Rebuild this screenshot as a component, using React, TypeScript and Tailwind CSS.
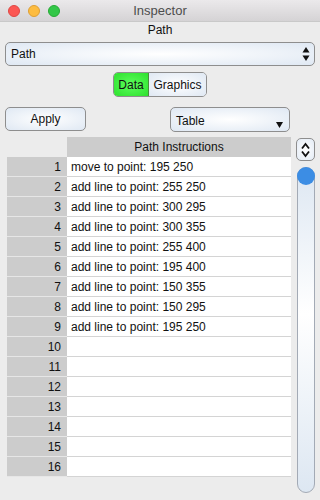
const rows = [
  "move to point: 195 250",
  "add line to point: 255 250",
  "add line to point: 300 295",
  "add line to point: 300 355",
  "add line to point: 255 400",
  "add line to point: 195 400",
  "add line to point: 150 355",
  "add line to point: 150 295",
  "add line to point: 195 250",
  "",
  "",
  "",
  "",
  "",
  "",
  "",
];

function UpDown({ className }: { className?: string }) {
  return (
    <svg width="8" height="16" viewBox="0 0 8 16" className={className}>
      <path d="M4 1 L7.5 6.5 L0.5 6.5 Z" fill="#111" />
      <path d="M4 15 L7.5 9.5 L0.5 9.5 Z" fill="#111" />
    </svg>
  );
}

export default function App() {
  return (
    <div className="w-[320px] h-[500px] overflow-hidden bg-[#ececec] font-['Liberation_Sans',Arial,sans-serif] text-[12px] text-[#111] flex flex-col">
      {/* title bar */}
      <div className="relative h-[22px] shrink-0 flex items-center gap-[8px] pl-[8px] border-b border-[#c9c9c9] bg-[linear-gradient(#ebe9eb,#d5d3d5)]">
        <span className="w-[12px] h-[12px] rounded-full bg-[#fc5753] border border-[#df4744]" />
        <span className="w-[12px] h-[12px] rounded-full bg-[#fdbc40] border border-[#de9f34]" />
        <span className="w-[12px] h-[12px] rounded-full bg-[#33c748] border border-[#27aa35]" />
        <span className="absolute inset-0 flex items-center justify-center text-[13px] text-[#4d4d4d]">Inspector</span>
      </div>

      <div className="h-[16px] leading-[16px] text-center">Path</div>

      {/* popup */}
      <div className="mt-[4px] mx-[5px] h-[24px] shrink-0 rounded-[5px] border border-[#8e8e8e] bg-[radial-gradient(ellipse_at_center,#ffffff_0%,#dfe8f3_100%)] flex items-center justify-between pl-[5px] pr-[4px]">
        <span>Path</span>
        <UpDown />
      </div>

      {/* segmented */}
      <div className="mt-[6px] self-center h-[25px] w-[94px] shrink-0 rounded-[5px] border border-[#8e8e8e] overflow-hidden flex">
        <div className="w-[35px] flex items-center justify-center border-r border-[#4a8f3c] bg-[radial-gradient(ellipse_at_center,#5cff5c_0%,#2ee02e_100%)]">Data</div>
        <div className="flex-1 flex items-center justify-center bg-[radial-gradient(ellipse_at_center,#ffffff_0%,#dfe8f3_100%)]">Graphics</div>
      </div>

      {/* buttons */}
      <div className="mt-[10px] px-[5px] flex items-start justify-between pr-[30px]">
        <div className="w-[81px] h-[24px] rounded-[5px] border border-[#8e8e8e] bg-[radial-gradient(ellipse_at_center,#ffffff_0%,#dfe8f3_100%)] flex items-center justify-center">Apply</div>
        <div className="w-[120px] h-[25px] rounded-[5px] border border-[#8e8e8e] bg-[radial-gradient(ellipse_at_center,#ffffff_0%,#dfe8f3_100%)] flex justify-between pl-[5px] pr-[6px]">
          <span className="pt-[4px]">Table</span>
          <svg width="7" height="6" viewBox="0 0 7 6" className="mt-[14px]">
            <path d="M0 0 L7 0 L3.5 6 Z" fill="#111" />
          </svg>
        </div>
      </div>

      {/* table + scroller */}
      <div className="mt-[5px] pl-[7px] flex gap-[5px]">
        <div className="w-[284px] flex flex-col">
          <div className="h-[20px] flex">
            <div className="w-[60px]" />
            <div className="w-[224px] bg-[#cccccc] flex items-center justify-center">Path Instructions</div>
          </div>
          {rows.map((r, i) => (
            <div key={i} className="h-[20px] flex">
              <div className="w-[60px] bg-[#cccccc] border-b border-[#e6e6e6] flex items-center justify-end pr-[6px]">{i + 1}</div>
              <div className="w-[224px] bg-white border-b border-[#d4d4d4] flex items-center pl-[4px]">{r}</div>
            </div>
          ))}
        </div>
        <div className="w-[19px] flex flex-col items-center">
          <div className="mt-[1px] w-[19px] h-[23px] rounded-[5px] border border-[#8e8e8e] bg-[radial-gradient(ellipse_at_center,#ffffff_0%,#e3ebf5_100%)] flex items-center justify-center">
            <svg width="9" height="16" viewBox="0 0 9 16">
              <path d="M1 6.5 L4.5 2 L8 6.5" stroke="#111" strokeWidth="1.8" fill="none" />
              <path d="M1 9.5 L4.5 14 L8 9.5" stroke="#111" strokeWidth="1.8" fill="none" />
            </svg>
          </div>
          <div className="mt-[6px] w-[18px] h-[326px] rounded-full border border-[#a3aab5] bg-[linear-gradient(#dde7f2,#ffffff_45%,#dde7f2)] flex flex-col items-center">
            <span className="w-[18px] h-[18px] -mt-[1px] rounded-full bg-[#3c8de4]" />
          </div>
        </div>
      </div>
    </div>
  );
}
